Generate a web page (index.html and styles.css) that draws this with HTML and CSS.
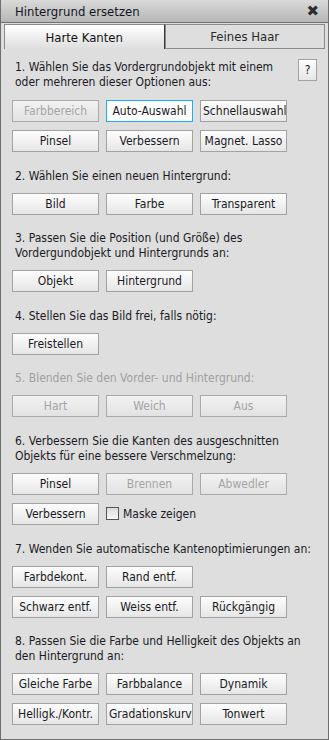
FILE: index.html
```html
<!DOCTYPE html>
<html lang="de">
<head>
  <meta charset="UTF-8">
  <title>Hintergrund ersetzen</title>
  <link rel="stylesheet" href="styles.css">
</head>
<body>
  <div class="panel">
    <div class="titlebar">
      <span class="title">Hintergrund ersetzen</span>
      <span class="close">&#10006;</span>
    </div>

    <div class="tabs">
      <div class="tab active">Harte Kanten</div>
      <div class="tab">Feines Haar</div>
    </div>

    <div class="content">
      <!-- 1 -->
      <section class="step">
        <div class="step-head">
          <p>1. Wählen Sie das Vordergrundobjekt mit einem oder mehreren dieser Optionen aus:</p>
          <button class="help">?</button>
        </div>
        <div class="btn-grid">
          <button disabled>Farbbereich</button>
          <button class="focused">Auto-Auswahl</button>
          <button class="clip">Schnellauswahl</button>
          <button>Pinsel</button>
          <button>Verbessern</button>
          <button>Magnet. Lasso</button>
        </div>
      </section>

      <!-- 2 -->
      <section class="step">
        <p>2. Wählen Sie einen neuen Hintergrund:</p>
        <div class="btn-grid">
          <button>Bild</button>
          <button>Farbe</button>
          <button>Transparent</button>
        </div>
      </section>

      <!-- 3 -->
      <section class="step">
        <p>3. Passen Sie die Position (und Größe) des Vordergundobjekt und Hintergrunds an:</p>
        <div class="btn-grid">
          <button>Objekt</button>
          <button>Hintergrund</button>
        </div>
      </section>

      <!-- 4 -->
      <section class="step">
        <p>4. Stellen Sie das Bild frei, falls nötig:</p>
        <div class="btn-grid">
          <button>Freistellen</button>
        </div>
      </section>

      <!-- 5 -->
      <section class="step disabled">
        <p>5. Blenden Sie den Vorder- und Hintergrund:</p>
        <div class="btn-grid">
          <button disabled>Hart</button>
          <button disabled>Weich</button>
          <button disabled>Aus</button>
        </div>
      </section>

      <!-- 6 -->
      <section class="step">
        <p>6. Verbessern Sie die Kanten des ausgeschnitten Objekts für eine bessere Verschmelzung:</p>
        <div class="btn-grid">
          <button>Pinsel</button>
          <button disabled>Brennen</button>
          <button disabled>Abwedler</button>
          <button>Verbessern</button>
          <label class="check"><span class="box"></span>Maske zeigen</label>
        </div>
      </section>

      <!-- 7 -->
      <section class="step">
        <p>7. Wenden Sie automatische Kantenoptimierungen an:</p>
        <div class="btn-grid">
          <button>Farbdekont.</button>
          <button>Rand entf.</button>
          <span></span>
          <button>Schwarz entf.</button>
          <button>Weiss entf.</button>
          <button>Rückgängig</button>
        </div>
      </section>

      <!-- 8 -->
      <section class="step">
        <p>8. Passen Sie die Farbe und Helligkeit des Objekts an den Hintergrund an:</p>
        <div class="btn-grid">
          <button>Gleiche Farbe</button>
          <button>Farbbalance</button>
          <button>Dynamik</button>
          <button>Helligk./Kontr.</button>
          <button class="clip">Gradationskurve</button>
          <button>Tonwert</button>
        </div>
      </section>
    </div>
  </div>
</body>
</html>
```

FILE: styles.css
```css
* {
  box-sizing: border-box;
}

body {
  margin: 0;
  font-family: 'DejaVu Sans Condensed', 'Liberation Sans', sans-serif;
  font-size: 12px;
  color: #1a1a24;
  background: #dedede;
}

.panel {
  width: 329px;
  height: 740px;
  border: 1px solid #6e6e6e;
  border-top: none;
  background: #dedede;
  overflow: hidden;
}

.titlebar {
  height: 23px;
  display: flex;
  align-items: center;
  justify-content: space-between;
  padding: 0 9px 0 14px;
  background: linear-gradient(#dadada, #b6b6b6);
  border-bottom: 1px solid #707070;
}

.title {
  font-size: 13px;
  color: #14141e;
}

.close {
  font-size: 15px;
  color: #2e2e2e;
  font-family: 'DejaVu Sans', sans-serif;
}

.tabs {
  display: flex;
  padding: 1px 3px 0 3px;
  height: 26px;
}

.tab {
  flex: 1;
  display: flex;
  align-items: center;
  justify-content: center;
  font-size: 13px;
  border: 1px solid #8a8a8a;
  background: #dedede;
  color: #2a2a2a;
}

.tab.active {
  background: linear-gradient(#ffffff, #dedede);
  border-bottom: none;
  border-right: 1px solid #3a3a3a;
  color: #111;
}

.content {
  padding: 10px 11px 0 11px;
}

.step {
  margin-bottom: 16.6px;
}

.step p {
  margin: 0 0 9px 3px;
  line-height: 15px;
}

.step-head {
  display: flex;
  align-items: flex-start;
  gap: 8px;
}

.step-head p {
  flex: 1;
  margin-top: 1px;
  margin-bottom: 10px;
}

.step.disabled p {
  color: #a0a0a0;
}

.btn-grid {
  display: grid;
  grid-template-columns: 87px 87px 87px;
  column-gap: 7px;
  row-gap: 8px;
}

button {
  height: 22px;
  padding: 0 3px;
  font-family: inherit;
  font-size: 12px;
  color: #1a1a24;
  background: linear-gradient(#fdfdfd, #e6e6e6);
  border: 1px solid #a2a2a2;
  border-radius: 0;
  white-space: nowrap;
  overflow: hidden;
}

button:disabled {
  color: #a4a4a4;
  background: linear-gradient(#f2f2f2, #e2e2e2);
  border-color: #aaaaaa;
}

button.focused {
  border-color: #18b4e8;
  background: #ffffff;
}

button.clip {
  text-align: left;
  padding-left: 2px;
}

.help {
  width: 19px;
  padding: 0;
  flex: none;
}

.check {
  grid-column: span 2;
  display: flex;
  align-items: center;
  gap: 4px;
}

.check .box {
  width: 13px;
  height: 13px;
  border: 1px solid #555;
  background: linear-gradient(#dcdcdc, #f8f8f8);
}
```
